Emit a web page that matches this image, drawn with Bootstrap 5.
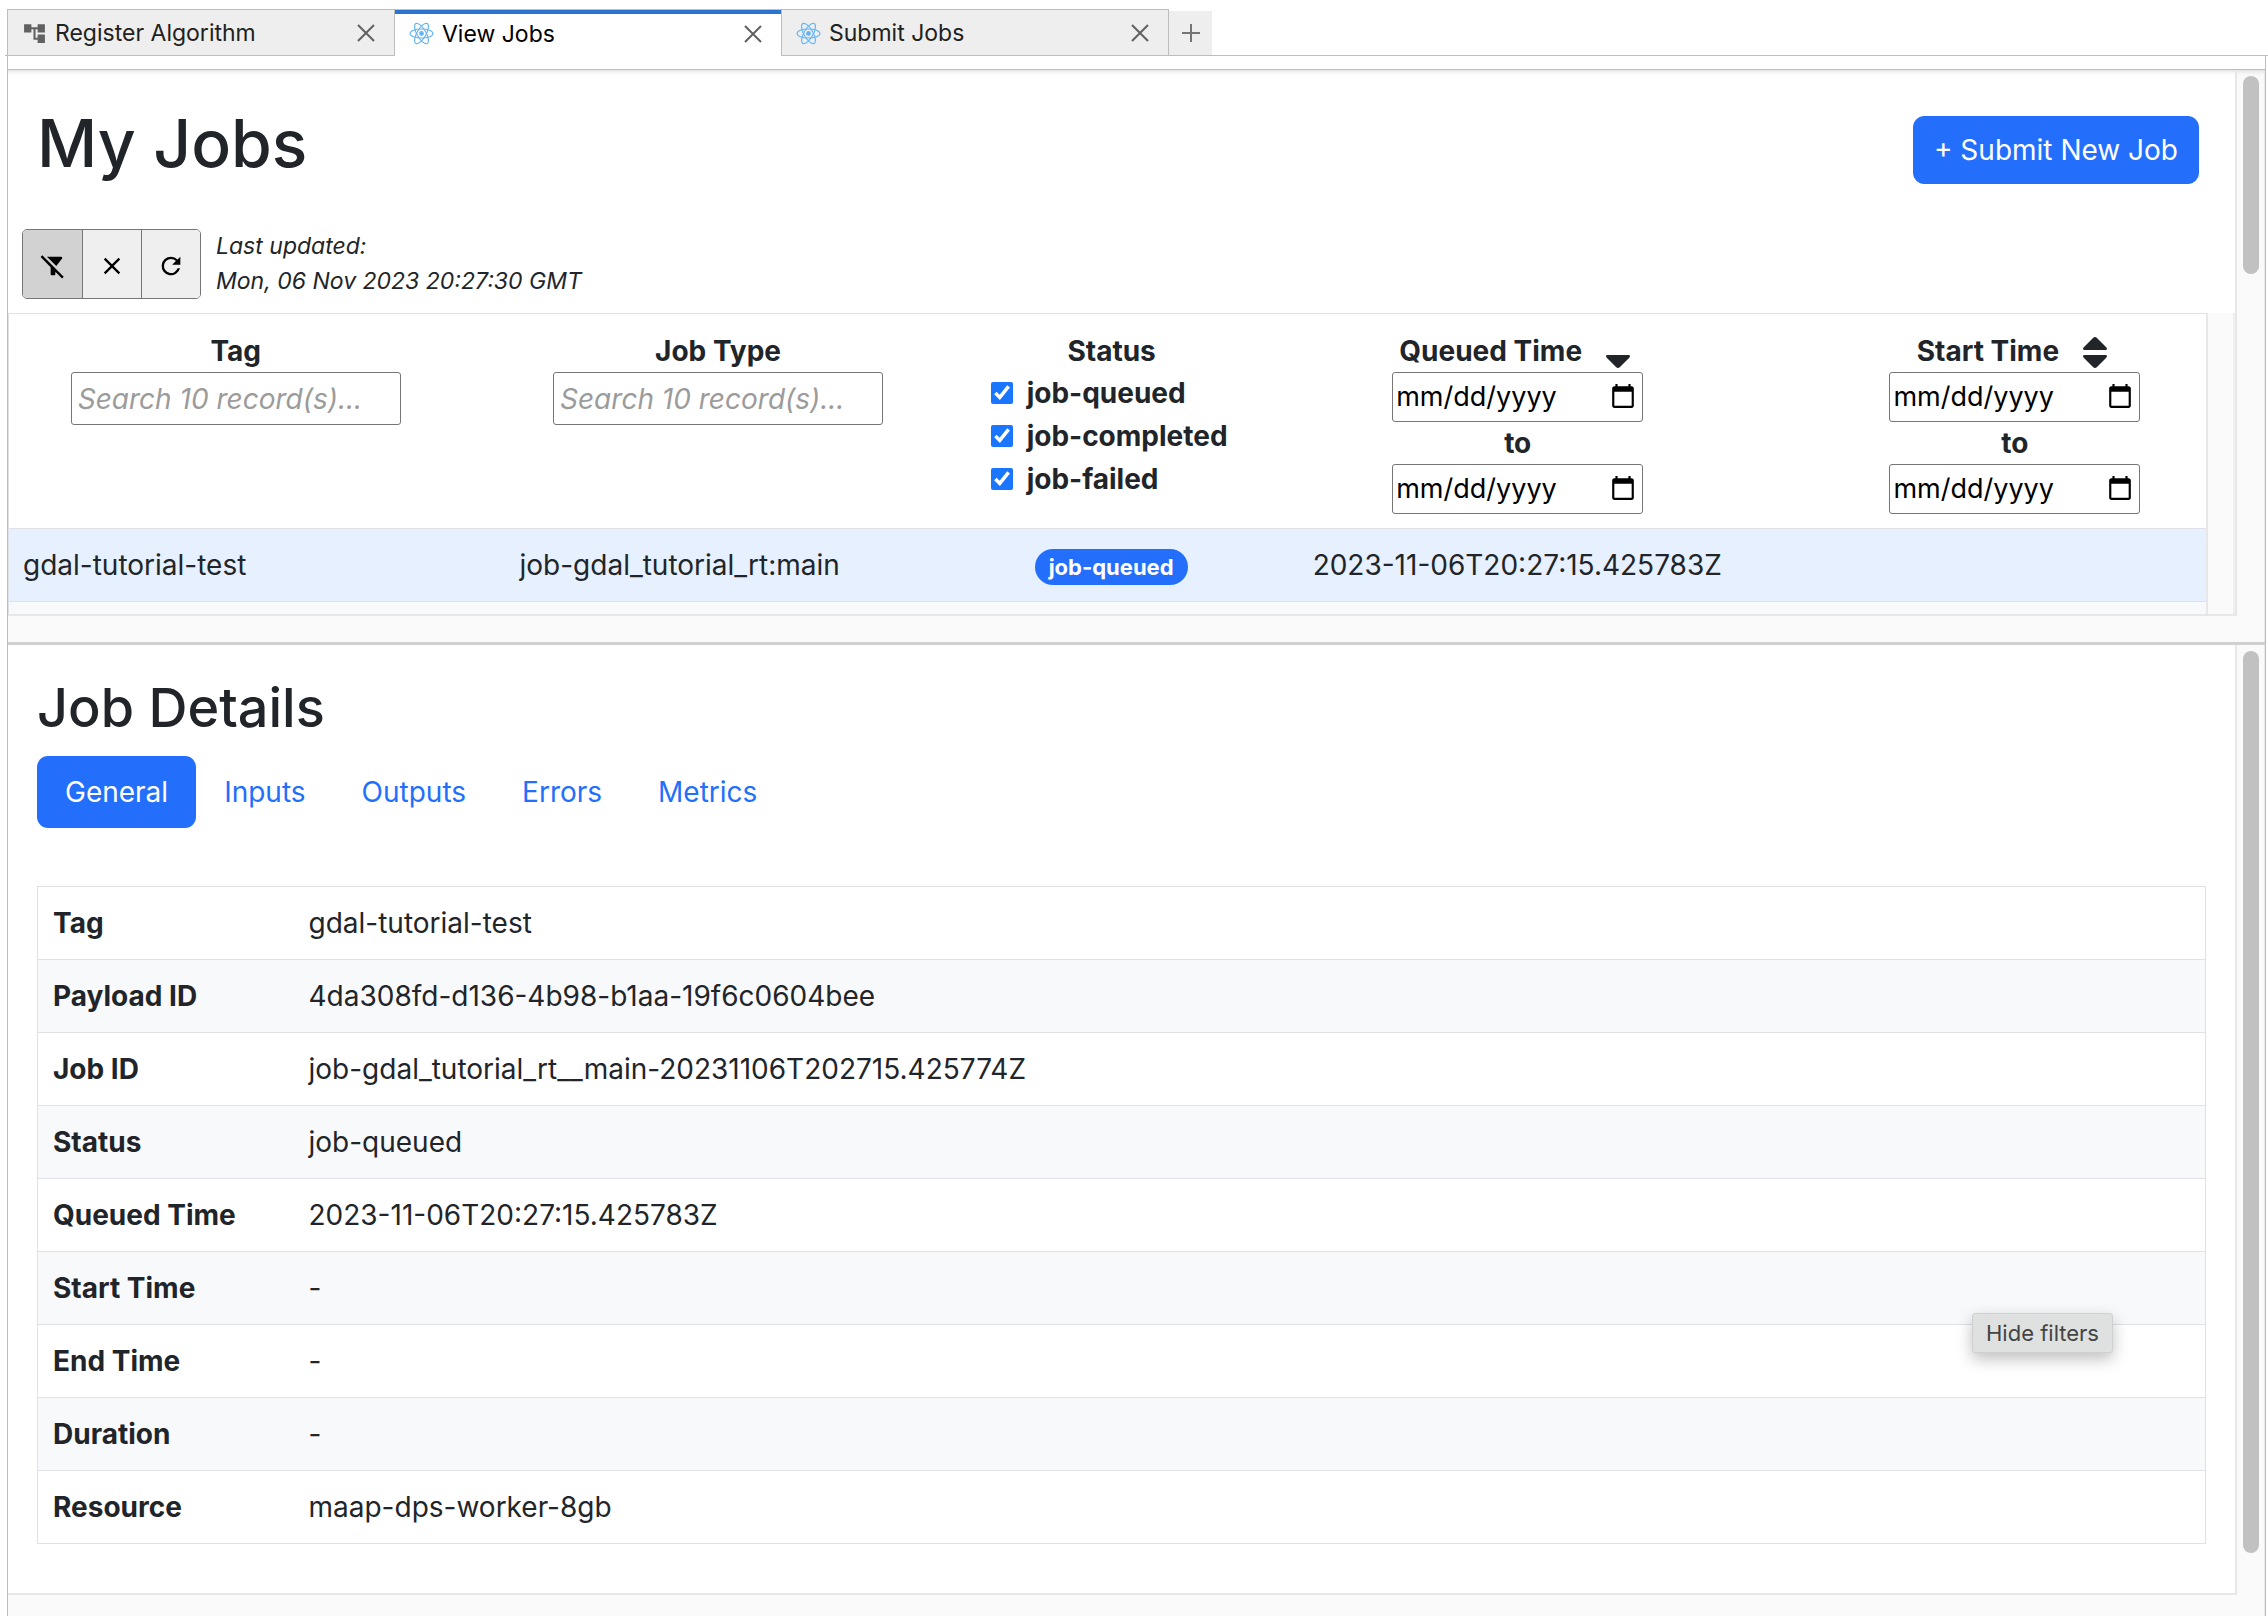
<!DOCTYPE html>
<html lang="en">
<head>
<meta charset="utf-8">
<meta name="viewport" content="width=device-width, initial-scale=1">
<title>View Jobs</title>
<link rel="stylesheet" href="https://cdn.jsdelivr.net/npm/bootstrap@5.3.0/dist/css/bootstrap.min.css">
<style>
  :root { --line: #bdbdbd; --soft: #e7e7e7; --track: #fafafa; --blue: #236ffb; }
  body { font-family: Inter, "Liberation Sans", sans-serif; font-size: 28px; line-height: 42px; color: #212529; }
  .app { min-height: 100vh; padding-left: 7px; padding-right: 2px; }

  /* dock tabs */
  .dock-tabs { padding-top: 9px; height: 56px; position: relative; }
  .dock-tabs::after { content: ""; position: absolute; left: -2px; right: -2px; bottom: 0; height: 1px; background: var(--line); }
  .dock-tab { width: 388px; margin-right: -1px; padding: 1px 14px 0; border: 1px solid var(--line); background: #eee; font-size: 23px; line-height: 40px; color: #212121; }
  .dock-tab.current { background: #fff; color: #000; border-bottom: 0; position: relative; z-index: 1; }
  .dock-tab.current::before { content: ""; position: absolute; left: 0; right: 0; top: 0; height: 4px; background: #2a74d0; }
  .dock-tab svg, .dock-add svg { display: block; }
  .plain { border: 0; background: none; padding: 0; }
  .dock-add { width: 43px; margin: 2px 0 1px 1px; background: #eee; }
  .dock-strip { height: 14px; border: 1px solid var(--line); border-top: 0; }

  .dock-body { border-left: 1px solid var(--line); border-right: 1px solid var(--line); }
  .pane { border-right: 1px solid var(--soft); background: var(--track); }
  .view { background: #fff; border-right: 2px solid var(--soft); border-bottom: 2px solid var(--soft); }
  .shade { box-shadow: inset 0 5px 5px -4px #d8d8d8; }
  .vtrack { width: 27px; padding: 6px 5px 6px 6px; }
  .thumb { width: 16px; border-radius: 8px; background: #c1c1c1; }
  .thumb-long { margin-bottom: 36px; }
  .htrack { height: 26px; }
  .inner-track { width: 29px; border-left: 2px solid var(--soft); border-right: 2px solid #efefef; background: var(--track); }

  h1.title { font-size: 66px; line-height: 82px; font-weight: 500; }
  h2.title { font-size: 54px; line-height: 64px; font-weight: 500; }
  .head { padding: 32px 36px 45px 29px; }
  .btn-submit { font-size: 28px; line-height: 42px; padding: 12px 20px; margin-top: 14px; border-radius: 11px; background: var(--blue); border-color: var(--blue); }
  .tools { padding: 0 14px 14px; gap: 15px; }
  .tool-set { border: 1px solid #767676; border-radius: 5px; overflow: hidden; height: 70px; }
  .tool-set button { width: 59px; border: 0; background: #efefef; padding: 0; }
  .tool-set button + button { border-left: 1px solid #767676; }
  .tool-set button.pressed { background: #d2d2d2; }
  .stamp { font-size: 23px; line-height: 35px; font-style: italic; }

  .jobs-view { height: 301px; overflow: hidden; }
  .jobs { --bs-table-bg: transparent; table-layout: fixed; border-left: 1px solid #dee2e6; border-top: 1px solid #dee2e6; color: #212529; }
  .jobs th, .jobs td { padding: 15px; border-color: #dee2e6; border-bottom-width: 1px; }
  .jobs td { padding-left: 14px; }
  .jobs th { text-align: center; vertical-align: top; font-weight: 700; padding: 16px 0 14px; }
  .jobs td.kind { padding-left: 57px; }
  .jobs th:last-child { padding-left: 38px; }
  .jobs .picked td { background: #e6f0ff; }
  .jobs .next td { background: #f8f9fb; }
  .sorter { margin-left: 18px; vertical-align: top; margin-top: 2px; }
  .find { width: 330px; height: 53px; border: 1px solid #767676; border-radius: 3px; padding: 0 6px; font-size: 28px; font-weight: 400; display: block; margin: 0 auto; }
  .find::placeholder { color: #9b9b9b; font-style: italic; opacity: 1; }
  .day { width: 251px; height: 50px; border: 1px solid #767676; border-radius: 3px; padding: 0 5px 0 3px; font-size: 27px; font-weight: 400; color: #000; background: #fff; display: block; margin: 0 auto; }
  .day::-webkit-calendar-picker-indicator { width: 28px; height: 28px; padding: 0; margin: 0 0 0 8px; }
  .tick { width: 22px; height: 22px; margin: 0; accent-color: #1a75ff; }
  .ticks { gap: 1px; padding-left: 17px; }
  .ticks label { gap: 14px; }
  .pill-tag { font-size: 22px; line-height: 22px; padding: 7px 14px; border-radius: 18px; background: var(--blue); color: #fff; vertical-align: middle; font-weight: 700; }

  .splitter { height: 3px; background: #d0d0d0; }
  .details { padding: 31px 29px 49px; }
  .nav-pills .nav-link { padding: 15px 28px; border-radius: 11px; color: var(--blue); line-height: 42px; }
  .nav-pills .nav-link.active { background: var(--blue); color: #fff; }
  .facts { --bs-table-bg: transparent; border: 1px solid #dee2e6; color: #212529; margin-top: 58px; }
  .facts th, .facts td { padding: 15px; border-color: #dee2e6; background: #fff; }
  .facts th { width: 256px; }
  .facts tr:nth-child(even) > * { background: #f8f9fb; }
  .hint { right: 155px; top: 1313px; padding: 0 13px; font-size: 22px; line-height: 38px; color: #444; background: #dfe1e0; border: 1px solid #cfd0d0; border-radius: 3px; box-shadow: 0 6px 16px rgba(0,0,0,.25); }
</style>
<script src="https://cdn.jsdelivr.net/npm/bootstrap@5.3.0/dist/js/bootstrap.bundle.min.js"></script>
</head>
<body>
<svg class="d-none" aria-hidden="true">
  <symbol id="i-react" viewBox="0 0 24 24"><g fill="none" stroke="#64b5f6" stroke-width="1.1"><ellipse cx="12" cy="12" rx="11" ry="4.3"/><ellipse cx="12" cy="12" rx="11" ry="4.3" transform="rotate(60 12 12)"/><ellipse cx="12" cy="12" rx="11" ry="4.3" transform="rotate(120 12 12)"/></g><circle cx="12" cy="12" r="2.3" fill="#64b5f6"/></symbol>
  <symbol id="i-tree" viewBox="0 0 24 24"><path fill="#616161" d="M22 11V3h-7v3H9V3H2v8h7V8h2v10h4v3h7v-8h-7v3h-2V8h2v3z"/></symbol>
  <symbol id="i-close" viewBox="0 0 24 24"><path fill="currentColor" d="M19 6.41 17.59 5 12 10.59 6.41 5 5 6.41 10.59 12 5 17.59 6.41 19 12 13.41 17.59 19 19 17.59 13.41 12z"/></symbol>
  <symbol id="i-cross" viewBox="0 0 28 28"><path d="M6 6l16 16M22 6L6 22" stroke="#616161" stroke-width="2"/></symbol>
</svg>
<div class="app d-flex flex-column">
  <div class="dock-tabs d-flex" role="tablist">
    <div class="dock-tab d-flex align-items-center" role="tab">
      <svg width="25" height="25"><use href="#i-tree"/></svg><span class="ms-2 flex-grow-1">Register Algorithm</span>
      <button class="plain" aria-label="Close Register Algorithm"><svg width="28" height="28"><use href="#i-cross"/></svg></button>
    </div>
    <div class="dock-tab current d-flex align-items-center" role="tab" aria-selected="true">
      <svg width="25" height="25"><use href="#i-react"/></svg><span class="ms-2 flex-grow-1">View Jobs</span>
      <button class="plain" aria-label="Close View Jobs"><svg width="28" height="28"><use href="#i-cross"/></svg></button>
    </div>
    <div class="dock-tab d-flex align-items-center" role="tab">
      <svg width="25" height="25"><use href="#i-react"/></svg><span class="ms-2 flex-grow-1">Submit Jobs</span>
      <button class="plain" aria-label="Close Submit Jobs"><svg width="28" height="28"><use href="#i-cross"/></svg></button>
    </div>
    <button class="plain dock-add d-flex align-items-center justify-content-center" aria-label="New tab"><svg width="18" height="18" viewBox="0 0 18 18"><path d="M9 0v18M0 9h18" stroke="#757575" stroke-width="2"/></svg></button>
  </div>
  <div class="dock-strip"></div>

  <div class="dock-body flex-grow-1 d-flex flex-column">
    <section class="pane d-flex">
      <div class="view shade flex-grow-1">
        <div class="head d-flex justify-content-between align-items-start">
          <h1 class="title m-0">My Jobs</h1>
          <button class="btn btn-primary btn-submit">+ Submit New Job</button>
        </div>
        <div class="tools d-flex align-items-center">
          <div class="tool-set d-flex">
            <button class="pressed" aria-label="Hide filters"><svg width="28" height="28" viewBox="0 0 24 24"><path d="M19.79 5.61C20.3 4.95 19.83 4 19 4H6.83l7.97 7.97zM2.81 2.81 1.39 4.22 10 13v6c0 .55.45 1 1 1h2c.55 0 1-.45 1-1v-2.17l5.78 5.78 1.41-1.41z"/></svg></button>
            <button aria-label="Clear"><svg width="28" height="28"><use href="#i-close"/></svg></button>
            <button aria-label="Refresh"><svg width="28" height="28" viewBox="0 0 24 24"><path d="M17.65 6.35A7.96 7.96 0 0 0 12 4a8 8 0 1 0 7.73 10h-2.08A6 6 0 1 1 12 6c1.66 0 3.14.69 4.22 1.78L13 11h7V4z"/></svg></button>
          </div>
          <div class="stamp">Last updated:<br>Mon, 06 Nov 2023 20:27:30 GMT</div>
        </div>
        <div class="d-flex">
          <div class="jobs-view flex-grow-1">
            <table class="table jobs mb-0">
              <colgroup><col style="width:20.66%"><col style="width:23.26%"><col style="width:12.56%"><col style="width:24.4%"><col></colgroup>
              <thead>
                <tr>
                  <th><label for="f-tag">Tag</label><input class="find" id="f-tag" placeholder="Search 10 record(s)..."></th>
                  <th><label for="f-type">Job Type</label><input class="find" id="f-type" placeholder="Search 10 record(s)..."></th>
                  <th>Status
                    <div class="ticks d-flex flex-column">
                      <label class="d-flex align-items-center"><input class="tick" type="checkbox" checked>job-queued</label>
                      <label class="d-flex align-items-center"><input class="tick" type="checkbox" checked>job-completed</label>
                      <label class="d-flex align-items-center"><input class="tick" type="checkbox" checked>job-failed</label>
                    </div>
                  </th>
                  <th>Queued Time<svg class="sorter" width="36" height="38" viewBox="0 0 36 38"><path fill="#212529" d="M7 23h22q2 1 0 3l-9 9q-2 2-4 0l-9-9q-2-2 0-3z"/></svg>
                    <input class="day" type="date" aria-label="Queued from"><label for="q-to">to</label><input class="day" id="q-to" type="date"></th>
                  <th>Start Time<svg class="sorter" width="36" height="38" viewBox="0 0 36 38"><path fill="#212529" d="M7 23h22q2 1 0 3l-9 9q-2 2-4 0l-9-9q-2-2 0-3zM7 18h22q2-1 0-3l-9-9q-2-2-4 0l-9 9q-2 2 0 3z"/></svg>
                    <input class="day" type="date" aria-label="Started from"><label for="s-to">to</label><input class="day" id="s-to" type="date"></th>
                </tr>
              </thead>
              <tbody>
                <tr class="picked"><td>gdal-tutorial-test</td><td class="kind">job-gdal_tutorial_rt:main</td><td class="text-center"><span class="pill-tag d-inline-block">job-queued</span></td><td class="text-center">2023-11-06T20:27:15.425783Z</td><td></td></tr>
                <tr class="next"><td></td><td></td><td></td><td></td><td></td></tr>
              </tbody>
            </table>
          </div>
          <div class="inner-track flex-shrink-0"></div>
        </div>
      </div>
      <div class="vtrack shade flex-shrink-0"><div class="thumb" style="height:198px"></div></div>
    </section>
    <div class="htrack pane"></div>
    <div class="splitter"></div>
    <section class="pane d-flex">
      <div class="view details flex-grow-1">
        <h2 class="title mb-3">Job Details</h2>
        <nav class="nav nav-pills">
          <a class="nav-link active" href="#general">General</a>
          <a class="nav-link" href="#inputs">Inputs</a>
          <a class="nav-link" href="#outputs">Outputs</a>
          <a class="nav-link" href="#errors">Errors</a>
          <a class="nav-link" href="#metrics">Metrics</a>
        </nav>
        <table class="table facts mb-0" id="general">
          <tbody>
            <tr><th scope="row">Tag</th><td>gdal-tutorial-test</td></tr>
            <tr><th scope="row">Payload ID</th><td>4da308fd-d136-4b98-b1aa-19f6c0604bee</td></tr>
            <tr><th scope="row">Job ID</th><td>job-gdal_tutorial_rt__main-20231106T202715.425774Z</td></tr>
            <tr><th scope="row">Status</th><td>job-queued</td></tr>
            <tr><th scope="row">Queued Time</th><td>2023-11-06T20:27:15.425783Z</td></tr>
            <tr><th scope="row">Start Time</th><td>-</td></tr>
            <tr><th scope="row">End Time</th><td>-</td></tr>
            <tr><th scope="row">Duration</th><td>-</td></tr>
            <tr><th scope="row">Resource</th><td>maap-dps-worker-8gb</td></tr>
          </tbody>
        </table>
      </div>
      <div class="vtrack flex-shrink-0 d-flex"><div class="thumb thumb-long"></div></div>
    </section>
    <div class="pane flex-grow-1"></div>
  </div>
</div>
<div class="hint position-absolute" role="tooltip">Hide filters</div>
</body>
</html>
